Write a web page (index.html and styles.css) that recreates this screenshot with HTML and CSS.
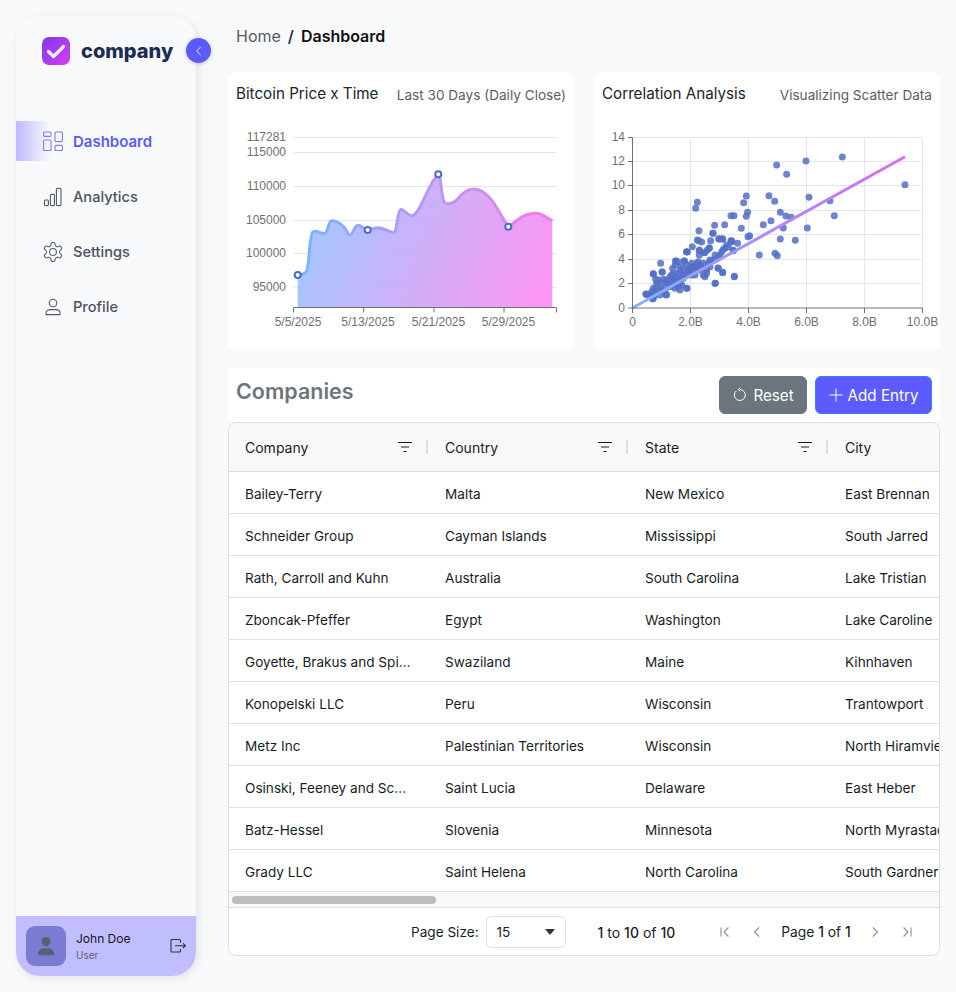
FILE: index.html
```html
<!DOCTYPE html>
<html lang="en">

<head>
    <meta charset="UTF-8">
    <title>Dashboard</title>
    <link rel="stylesheet" href="styles.css">
</head>

<body>
    <div class="layout">
        <aside class="sidebar">
            <div class="brand">
                <svg class="brand-logo" viewBox="0 0 30 30">
                    <defs>
                        <linearGradient id="logoFill" x1="0" y1="0" x2="1" y2="1">
                            <stop offset="0" stop-color="#7a3bea" />
                            <stop offset="1" stop-color="#d93cf6" />
                        </linearGradient>
                    </defs>
                    <rect x="1" y="1" width="28" height="28" rx="7" fill="url(#logoFill)" />
                    <path d="M7.5 15.5l5 5 10-10" fill="none" stroke="#f7f1ff" stroke-width="3.2" stroke-linecap="round" stroke-linejoin="round" />
                </svg>
                <span class="brand-name">company</span>
            </div>
            <button class="collapse-btn">
                <svg viewBox="0 0 12 12" width="12" height="12">
                    <path d="M7.8 1.8L3.6 6l4.2 4.2" fill="none" stroke="#e6e6ff" stroke-width="1" />
                </svg>
            </button>

            <nav class="nav">
                <a class="nav-item active">
                    <svg class="nav-icon" viewBox="0 0 20 20" fill="none" stroke="#7d7bff" stroke-width="1.1">
                        <rect x="0.6" y="1" width="7.4" height="4.4" rx="1" />
                        <rect x="12" y="1" width="7.4" height="9.6" rx="1" />
                        <rect x="0.6" y="9" width="7.4" height="10.6" rx="1" />
                        <rect x="12" y="14.4" width="7.4" height="5.2" rx="1" />
                    </svg>
                    Dashboard
                </a>
                <a class="nav-item">
                    <svg class="nav-icon" viewBox="0 0 20 20" fill="none" stroke="#555a66" stroke-width="1.1">
                        <rect x="1.4" y="13" width="4" height="5.6" rx="1" />
                        <rect x="7.4" y="7.4" width="4" height="11.2" rx="1" />
                        <rect x="13.4" y="1.4" width="4.6" height="17.2" rx="1.4" />
                    </svg>
                    Analytics
                </a>
                <a class="nav-item">
                    <svg class="nav-icon" viewBox="1.5 1.5 21 21" fill="none" stroke="#555a66" stroke-width="1.1">
                        <path d="M12.22 2h-.44a2 2 0 0 0-2 2v.18a2 2 0 0 1-1 1.73l-.43.25a2 2 0 0 1-2 0l-.15-.08a2 2 0 0 0-2.73.73l-.22.38a2 2 0 0 0 .73 2.73l.15.1a2 2 0 0 1 1 1.72v.51a2 2 0 0 1-1 1.74l-.15.09a2 2 0 0 0-.73 2.73l.22.38a2 2 0 0 0 2.73.73l.15-.08a2 2 0 0 1 2 0l.43.25a2 2 0 0 1 1 1.73V20a2 2 0 0 0 2 2h.44a2 2 0 0 0 2-2v-.18a2 2 0 0 1 1-1.73l.43-.25a2 2 0 0 1 2 0l.15.08a2 2 0 0 0 2.73-.73l.22-.39a2 2 0 0 0-.73-2.73l-.15-.08a2 2 0 0 1-1-1.74v-.5a2 2 0 0 1 1-1.74l.15-.09a2 2 0 0 0 .73-2.73l-.22-.38a2 2 0 0 0-2.73-.73l-.15.08a2 2 0 0 1-2 0l-.43-.25a2 2 0 0 1-1-1.73V4a2 2 0 0 0-2-2z" />
                        <circle cx="12" cy="12" r="3.6" />
                    </svg>
                    Settings
                </a>
                <a class="nav-item">
                    <svg class="nav-icon" viewBox="0 0 20 20" fill="none" stroke="#555a66" stroke-width="1.1">
                        <circle cx="10" cy="6" r="3.8" />
                        <path d="M3 17.6v-1.4c0-2.2 1.8-3.6 4-3.6h6c2.2 0 4 1.400 4 3.600v1.400z" stroke-linejoin="round" />
                    </svg>
                    Profile
                </a>
            </nav>

            <div class="user-box">
                <div class="avatar">
                    <svg viewBox="0 0 20 20" width="20" height="20" fill="#5c6070">
                        <circle cx="10" cy="5.6" r="4.6" />
                        <path d="M1.800 18.400c0-3.800 2.400-6 5.400-6h5.600c3 0 5.400 2.200 5.400 6 0 .6-.4.8-.8.8H2.600c-.4 0-.8-.2-.8-.8z" />
                    </svg>
                </div>
                <div class="user-info">
                    <div class="user-name">John Doe</div>
                    <div class="user-role">User</div>
                </div>
                <svg class="logout" viewBox="0 0 16 16" width="16" height="16" fill="none" stroke="#2c3040" stroke-width="1.100">
                    <path d="M10.500 4.500V2.500a1 1 0 0 0-1-1h-7.500a1 1 0 0 0-1 1v10.500a1 1 0 0 0 1 1h7.500a1 1 0 0 0 1-1v-2" />
                    <path d="M5 7.700h10.300M13 5.400l2.400 2.300-2.400 2.300" />
                </svg>
            </div>
        </aside>

        <main class="main">
            <div class="breadcrumb">
                <span>Home</span>
                <span class="crumb-sep">/</span>
                <span class="crumb-current">Dashboard</span>
            </div>

            <section class="charts">
                <div class="card">
                    <div class="card-head">
                        <span class="card-title">Bitcoin Price x Time</span>
                        <span class="card-sub">Last 30 Days (Daily Close)</span>
                    </div>
                    <!-- viewBox is page coordinates, easier to read off the screenshot -->
                    <svg class="chart" viewBox="228 120 346 231">
                        <defs>
                            <linearGradient id="areaFill" gradientUnits="userSpaceOnUse" x1="298" y1="200" x2="552" y2="300">
                                <stop offset="0" stop-color="#92c3ff" />
                                <stop offset="1" stop-color="#ff86f1" />
                            </linearGradient>
                            <linearGradient id="areaLine" gradientUnits="userSpaceOnUse" x1="298" y1="230" x2="552" y2="230">
                                <stop offset="0" stop-color="#74b6ff" />
                                <stop offset="1" stop-color="#f879ee" />
                            </linearGradient>
                        </defs>
                        <g class="grid-lines">
                            <path d="M293.500 137.500H556.500M293.500 152.500H556.500M293.500 186.500H556.500M293.500 220.500H556.500M293.500 253.500H556.500M293.500 287.500H556.500" />
                        </g>
                        <path class="area" d="M297.700 275C302 275 305 274.500 306.700 271C309 266 309 246 311 238C312 232 313 231.300 315 231.300C318 231.300 322 234 325 233.300C328 232.500 328 221 332 220.700C336 220.500 341 224 344 227C346 229 348 235 350 235C353 235 354 225.500 358 225.300C361 225 364 230 367.700 230C371 230 374 227.700 378.300 227.700C384 227.700 390 233 394 232.500C397 232 397 211 401 209.500C404 208.500 407 215.700 411.700 215.700C416 215.700 419 209 422 203C426 195 432 180 438.300 174.300C441 172 441 200 445 203C449 205 452 203 456.700 200C460 197 464 189.500 473.300 189C480 189 485 193 489 197C496 204 502 218 508.300 226.700C513 225 520 215 530 214C534 213 538 213 541 214.500C545 216 549 219.500 552.300 220.700V307.500H297.700Z" />
                        <path class="area-line" d="M297.700 275C302 275 305 274.500 306.700 271C309 266 309 246 311 238C312 232 313 231.300 315 231.300C318 231.300 322 234 325 233.300C328 232.500 328 221 332 220.700C336 220.500 341 224 344 227C346 229 348 235 350 235C353 235 354 225.500 358 225.300C361 225 364 230 367.700 230C371 230 374 227.700 378.300 227.700C384 227.700 390 233 394 232.500C397 232 397 211 401 209.500C404 208.500 407 215.700 411.700 215.700C416 215.700 419 209 422 203C426 195 432 180 438.300 174.300C441 172 441 200 445 203C449 205 452 203 456.700 200C460 197 464 189.500 473.300 189C480 189 485 193 489 197C496 204 502 218 508.300 226.700C513 225 520 215 530 214C534 213 538 213 541 214.500C545 216 549 219.500 552.300 220.700" />
                        <path class="axis" d="M293.500 307.500H556.500M293.500 307.500v5M363.700 307.500v5M434 307.500v5M504 307.500v5M556.500 307.500v5" />
                        <g class="marks">
                            <circle cx="297.700" cy="275" r="3" />
                            <circle cx="367.700" cy="230" r="3" />
                            <circle cx="438.300" cy="174.300" r="3" />
                            <circle cx="508.300" cy="226.700" r="3" />
                        </g>
                        <g class="axis-y">
                            <text x="286" y="141">117281</text>
                            <text x="286" y="156">115000</text>
                            <text x="286" y="190">110000</text>
                            <text x="286" y="224">105000</text>
                            <text x="286" y="257">100000</text>
                            <text x="286" y="291">95000</text>
                        </g>
                        <g class="axis-x">
                            <text x="298" y="326">5/5/2025</text>
                            <text x="368" y="326">5/13/2025</text>
                            <text x="438.500" y="326">5/21/2025</text>
                            <text x="508.500" y="326">5/29/2025</text>
                        </g>
                    </svg>
                </div>

                <div class="card">
                    <div class="card-head">
                        <span class="card-title">Correlation Analysis</span>
                        <span class="card-sub">Visualizing Scatter Data</span>
                    </div>
                    <svg class="chart" viewBox="594 120 346 231">
                        <defs>
                            <linearGradient id="fitLine" gradientUnits="userSpaceOnUse" x1="632" y1="308" x2="905" y2="157">
                                <stop offset="0" stop-color="#7fb4ff" />
                                <stop offset="0.6" stop-color="#b882f5" />
                                <stop offset="1" stop-color="#d56ff0" />
                            </linearGradient>
                        </defs>
                        <g class="grid-lines">
                            <path d="M632.500 137.500H922.500M632.500 161.500H922.500M632.500 185.500H922.500M632.500 210.500H922.500M632.500 234.500H922.500M632.500 259.500H922.500M632.500 283.500H922.500" />
                            <path d="M690.500 137.500V308M748.500 137.500V308M806.500 137.500V308M864.500 137.500V308M922.500 137.500V308" />
                        </g>
                        <!-- dots read off the 3x zooms, so these two groups are scaled back down -->
                        <g class="dots" transform="translate(590 70) scale(0.3333)">
                            <circle cx="757" cy="261" /><circle cx="648" cy="273" /><circle cx="560" cy="285" /><circle cx="590" cy="313" />
                            <circle cx="945" cy="344" /><circle cx="657" cy="382" /><circle cx="537" cy="377" /><circle cx="554" cy="394" />
                            <circle cx="469" cy="378" /><circle cx="461" cy="398" /><circle cx="322" cy="397" /><circle cx="317" cy="415" />
                            <circle cx="720" cy="392" /><circle cx="733" cy="437" /><circle cx="571" cy="427" /><circle cx="588" cy="438" />
                            <circle cx="604" cy="442" /><circle cx="423" cy="437" /><circle cx="432" cy="437" /><circle cx="469" cy="439" />
                            <circle cx="473" cy="427" /><circle cx="404" cy="464" /><circle cx="374" cy="466" /><circle cx="327" cy="482" />
                            <circle cx="454" cy="475" /><circle cx="520" cy="464" /><circle cx="543" cy="452" /><circle cx="580" cy="474" />
                            <circle cx="652" cy="474" /><circle cx="479" cy="497" /><circle cx="474" cy="500" /><circle cx="369" cy="490" />
                            <circle cx="386" cy="506" /><circle cx="398" cy="506" /><circle cx="571" cy="507" /><circle cx="616" cy="511" />
                            <circle cx="322" cy="510" /><circle cx="326" cy="512" /><circle cx="335" cy="516" /><circle cx="362" cy="512" />
                            <circle cx="423" cy="512" /><circle cx="426" cy="515" /><circle cx="443" cy="520" /><circle cx="307" cy="530" />
                            <circle cx="290" cy="545" /><circle cx="292" cy="546" /><circle cx="328" cy="540" /><circle cx="358" cy="533" />
                            <circle cx="352" cy="540" /><circle cx="345" cy="548" /><circle cx="430" cy="541" /><circle cx="508" cy="555" />
                            <circle cx="555" cy="550" /><circle cx="562" cy="557" /><circle cx="212" cy="580" /><circle cx="375" cy="640" />
                            <circle cx="433" cy="620" /><circle cx="398" cy="608" /><circle cx="384" cy="594" /><circle cx="291" cy="655" />
                            <circle cx="190" cy="612" /><circle cx="216" cy="606" /><circle cx="257" cy="573" /><circle cx="264" cy="575" />
                            <circle cx="283" cy="574" /><circle cx="168" cy="673" /><circle cx="190" cy="685" /><circle cx="230" cy="674" />
                            <circle cx="175" cy="675" />
                        </g>
                        <g class="dots" transform="translate(630 220) scale(0.3333)">
                            <circle cx="249" cy="40" /><circle cx="268" cy="57" /><circle cx="278" cy="58" /><circle cx="305" cy="62" />
                            <circle cx="290" cy="75" /><circle cx="285" cy="85" /><circle cx="275" cy="95" /><circle cx="170" cy="96" />
                            <circle cx="208" cy="92" /><circle cx="238" cy="85" /><circle cx="222" cy="98" /><circle cx="208" cy="105" />
                            <circle cx="255" cy="105" /><circle cx="265" cy="110" /><circle cx="310" cy="92" /><circle cx="240" cy="120" />
                            <circle cx="137" cy="123" /><circle cx="163" cy="122" /><circle cx="185" cy="130" /><circle cx="200" cy="130" />
                            <circle cx="210" cy="135" /><circle cx="136" cy="135" /><circle cx="155" cy="140" /><circle cx="190" cy="140" />
                            <circle cx="215" cy="145" /><circle cx="230" cy="150" /><circle cx="240" cy="140" /><circle cx="265" cy="145" />
                            <circle cx="278" cy="157" /><circle cx="70" cy="161" /><circle cx="97" cy="156" /><circle cx="130" cy="160" />
                            <circle cx="145" cy="160" /><circle cx="165" cy="155" /><circle cx="185" cy="150" /><circle cx="200" cy="150" />
                            <circle cx="220" cy="165" /><circle cx="120" cy="170" /><circle cx="130" cy="175" /><circle cx="150" cy="180" />
                            <circle cx="175" cy="165" /><circle cx="77" cy="178" /><circle cx="100" cy="178" /><circle cx="80" cy="190" />
                            <circle cx="95" cy="190" /><circle cx="115" cy="190" /><circle cx="140" cy="195" /><circle cx="160" cy="175" />
                            <circle cx="48" cy="222" /><circle cx="60" cy="225" /><circle cx="70" cy="205" /><circle cx="80" cy="200" />
                            <circle cx="75" cy="215" /><circle cx="95" cy="205" /><circle cx="105" cy="210" /><circle cx="68" cy="237" />
                            <circle cx="90" cy="225" /><circle cx="108" cy="225" /><circle cx="135" cy="205" /><circle cx="150" cy="210" />
                            <circle cx="170" cy="205" /><circle cx="150" cy="190" /><circle cx="256" cy="190" /><circle cx="313" cy="169" />
                            <circle cx="110" cy="180" /><circle cx="125" cy="185" /><circle cx="195" cy="165" /><circle cx="210" cy="150" />
                            <circle cx="225" cy="170" /><circle cx="205" cy="125" /><circle cx="180" cy="145" /><circle cx="170" cy="135" />
                            <circle cx="150" cy="150" /><circle cx="128" cy="145" />
                            <circle cx="195" cy="140" /><circle cx="205" cy="140" /><circle cx="175" cy="150" /><circle cx="160" cy="165" />
                            <circle cx="140" cy="170" /><circle cx="125" cy="165" /><circle cx="110" cy="190" /><circle cx="88" cy="210" />
                            <circle cx="75" cy="225" /><circle cx="65" cy="215" /><circle cx="85" cy="180" /><circle cx="135" cy="185" />
                            <circle cx="155" cy="195" /><circle cx="185" cy="165" /><circle cx="235" cy="130" /><circle cx="250" cy="120" />
                            <circle cx="270" cy="105" /><circle cx="280" cy="88" /><circle cx="295" cy="80" /><circle cx="220" cy="130" />
                            <circle cx="230" cy="160" /><circle cx="120" cy="200" /><circle cx="100" cy="215" /><circle cx="145" cy="200" />
                        </g>
                        <path class="fit-line" d="M632.300 308L905 156.700" />
                        <path class="axis" d="M632.500 137.500V308H922.500M628 137.500h4.500M628 161.500h4.500M628 185.500h4.500M628 210.500h4.500M628 234.500h4.500M628 259.500h4.500M628 283.500h4.500M628 308h4.500M632.500 308v5M690.500 308v5M748.500 308v5M806.500 308v5M864.500 308v5M922.500 308v5" />
                        <g class="axis-y">
                            <text x="625" y="141">14</text>
                            <text x="625" y="165">12</text>
                            <text x="625" y="189">10</text>
                            <text x="625" y="214">8</text>
                            <text x="625" y="238">6</text>
                            <text x="625" y="263">4</text>
                            <text x="625" y="287">2</text>
                            <text x="625" y="312">0</text>
                        </g>
                        <g class="axis-x">
                            <text x="632.500" y="326">0</text>
                            <text x="690.500" y="326">2.0B</text>
                            <text x="748.500" y="326">4.0B</text>
                            <text x="806.500" y="326">6.0B</text>
                            <text x="864.500" y="326">8.0B</text>
                            <text x="922.500" y="326">10.0B</text>
                        </g>
                    </svg>
                </div>
            </section>

            <section class="companies">
                <div class="companies-head">
                    <h2 class="companies-title">Companies</h2>
                    <div class="companies-actions">
                        <button class="btn btn-reset">
                            <svg viewBox="0 0 16 16" width="16" height="16" fill="none" stroke="#fff" stroke-width="1">
                                <path d="M4.400 3.700A5.500 5.500 0 1 0 8 2.500" />
                                <path d="M8.300 .8L6.200 2.500l2.100 1.700" />
                            </svg>
                            Reset
                        </button>
                        <button class="btn btn-add">
                            <svg viewBox="0 0 14 14" width="14" height="14" stroke="#fff" stroke-width="1">
                                <path d="M7 .5v13M.5 7h13" />
                            </svg>
                            Add Entry
                        </button>
                    </div>
                </div>

                <div class="table">
                    <div class="table-scroll">
                        <div class="row row-head">
                            <div class="cell">Company
                                <svg class="filter" viewBox="0 0 14 12" width="14" height="12"><path d="M0 1.500h14M3 6h8M5.500 10.500h3" /></svg>
                            </div>
                            <div class="cell">Country
                                <svg class="filter" viewBox="0 0 14 12" width="14" height="12"><path d="M0 1.500h14M3 6h8M5.500 10.500h3" /></svg>
                            </div>
                            <div class="cell">State
                                <svg class="filter" viewBox="0 0 14 12" width="14" height="12"><path d="M0 1.500h14M3 6h8M5.500 10.500h3" /></svg>
                            </div>
                            <div class="cell">City</div>
                        </div>
                        <div class="row"><div class="cell">Bailey-Terry</div><div class="cell">Malta</div><div class="cell">New Mexico</div><div class="cell">East Brennan</div></div>
                        <div class="row"><div class="cell">Schneider Group</div><div class="cell">Cayman Islands</div><div class="cell">Mississippi</div><div class="cell">South Jarred</div></div>
                        <div class="row"><div class="cell">Rath, Carroll and Kuhn</div><div class="cell">Australia</div><div class="cell">South Carolina</div><div class="cell">Lake Tristian</div></div>
                        <div class="row"><div class="cell">Zboncak-Pfeffer</div><div class="cell">Egypt</div><div class="cell">Washington</div><div class="cell">Lake Caroline</div></div>
                        <div class="row"><div class="cell">Goyette, Brakus and Spinka</div><div class="cell">Swaziland</div><div class="cell">Maine</div><div class="cell">Kihnhaven</div></div>
                        <div class="row"><div class="cell">Konopelski LLC</div><div class="cell">Peru</div><div class="cell">Wisconsin</div><div class="cell">Trantowport</div></div>
                        <div class="row"><div class="cell">Metz Inc</div><div class="cell">Palestinian Territories</div><div class="cell">Wisconsin</div><div class="cell">North Hiramview</div></div>
                        <div class="row"><div class="cell">Osinski, Feeney and Schmidt</div><div class="cell">Saint Lucia</div><div class="cell">Delaware</div><div class="cell">East Heber</div></div>
                        <div class="row"><div class="cell">Batz-Hessel</div><div class="cell">Slovenia</div><div class="cell">Minnesota</div><div class="cell">North Myrastad</div></div>
                        <div class="row"><div class="cell">Grady LLC</div><div class="cell">Saint Helena</div><div class="cell">North Carolina</div><div class="cell">South Gardner</div></div>
                    </div>
                    <div class="h-scroll"><div class="h-scroll-thumb"></div></div>
                    <div class="pager">
                        <span class="pager-label">Page Size:</span>
                        <div class="page-select"><span>15</span><i class="caret"></i></div>
                        <span class="pager-count"><b>1</b> to <b>10</b> of <b>10</b></span>
                        <div class="pager-nav">
                            <svg viewBox="0 0 12 12" width="12" height="12"><path d="M2 1.500v9M9.500 1.500L5 6l4.500 4.500" /></svg>
                            <svg viewBox="0 0 12 12" width="12" height="12"><path d="M8 1.500L3.500 6 8 10.500" /></svg>
                            <span class="pager-page">Page <b>1</b> of <b>1</b></span>
                            <svg viewBox="0 0 12 12" width="12" height="12"><path d="M4 1.500L8.500 6 4 10.500" /></svg>
                            <svg viewBox="0 0 12 12" width="12" height="12"><path d="M10 1.500v9M2.500 1.500L7 6l-4.500 4.500" /></svg>
                        </div>
                    </div>
                </div>
            </section>
        </main>
    </div>
</body>

</html>
```

FILE: styles.css
```css
* {
    box-sizing: border-box;
}

body {
    margin: 0;
    background: #f8f9fb;
    color: #212529;
    font-family: Inter, "Noto Sans", sans-serif;
    font-size: 13.6px;
}

.layout {
    display: flex;
    height: 992px;
    overflow: hidden;
}

/* sidebar */
.sidebar {
    position: relative;
    display: flex;
    flex-direction: column;
    flex: none;
    width: 180px;
    height: 960px;
    margin: 16px 0 0 16px;
    background: #f8f9fb;
    border-radius: 24px;
    box-shadow: 2px 2px 8px rgba(0, 0, 0, 0.09);
}

.brand {
    display: flex;
    align-items: center;
    gap: 10px;
    padding-left: 25px;
    height: 70px;
}

.brand-logo {
    width: 30px;
    height: 30px;
    flex: none;
}

.brand-name {
    color: #1a2d55;
    font-size: 20px;
    font-weight: 800;
}

.collapse-btn {
    position: absolute;
    top: 22px;
    left: 170px;
    display: flex;
    align-items: center;
    justify-content: center;
    width: 25px;
    height: 25px;
    padding: 0;
    border: none;
    border-radius: 50%;
    background: #5b5bfb;
    box-shadow: 0 1px 4px rgba(0, 0, 0, 0.2);
}

.nav {
    display: flex;
    flex-direction: column;
    gap: 15px;
    padding-top: 35px;
    flex: 1;
}

.nav-item {
    display: flex;
    align-items: center;
    gap: 10px;
    height: 40px;
    padding-left: 27px;
    color: #4d525e;
    font-size: 14.6px;
    font-weight: 500;
}

.nav-item.active {
    margin-bottom: 1px;
    color: #5b5bfb;
    font-size: 15px;
    font-weight: 600;
    background: linear-gradient(90deg, #bdbbff, rgba(189, 187, 255, 0) 34px);
}

.nav-icon {
    width: 20px;
    height: 20px;
    flex: none;
}

.user-box {
    display: flex;
    align-items: center;
    gap: 10px;
    height: 60px;
    padding: 0 10px;
    background: #c0beff;
    border-radius: 0 0 24px 24px;
}

.avatar {
    display: flex;
    align-items: center;
    justify-content: center;
    width: 40px;
    height: 40px;
    background: #7a7bd2;
    border-radius: 9px;
}

.user-info {
    flex: 1;
    padding-top: 1px;
}

.user-name {
    color: #15151f;
    font-size: 12px;
    line-height: 16px;
}

.user-role {
    margin-top: 1px;
    color: #5b5e72;
    font-size: 10px;
    line-height: 14px;
}

/* main column */
.main {
    flex: 1;
    min-width: 0;
    padding: 0 16px 0 32px;
}

.breadcrumb {
    display: flex;
    align-items: center;
    gap: 7px;
    height: 72px;
    padding: 0 0 0 8px;
    font-size: 16px;
    color: #555b66;
}

.crumb-sep {
    color: #333;
    font-weight: 600;
}

.crumb-current {
    color: #111;
    font-weight: 600;
}

.charts {
    display: flex;
    gap: 20px;
}

.card {
    width: 346px;
    height: 279px;
    background: #fff;
    border-radius: 8px;
}

.card-head {
    display: flex;
    align-items: center;
    justify-content: space-between;
    height: 48px;
    padding: 0 8px 6px 8px;
}

.card-title {
    color: #212529;
    font-size: 15.2px;
}

.card-sub {
    margin-top: 3px;
    color: #5a5d66;
    font-size: 13.6px;
}

.chart {
    display: block;
    width: 346px;
    height: 231px;
}

.chart text {
    fill: #6e7079;
    font-family: "Liberation Sans", Arial, sans-serif;
    font-size: 12px;
}

.grid-lines path {
    fill: none;
    stroke: #e0e6f1;
}

.axis {
    fill: none;
    stroke: #6e7079;
}

.area {
    fill: url(#areaFill);
    opacity: 0.88;
}

.area-line {
    fill: none;
    stroke: url(#areaLine);
    stroke-width: 3;
}

.marks circle {
    fill: #fff;
    stroke: #4a6cc5;
    stroke-width: 2;
}

.axis-y text {
    text-anchor: end;
}

.axis-x text {
    text-anchor: middle;
}

.dots circle {
    r: 10.5px;
    fill: #5470c6;
    opacity: 0.85;
}

.fit-line {
    fill: none;
    stroke: url(#fitLine);
    stroke-width: 3;
}

/* companies table */
.companies {
    margin-top: 17px;
}

.companies-head {
    display: flex;
    justify-content: space-between;
    height: 54px;
    padding: 8px 8px 0 8px;
    background: #fff;
}

.companies-title {
    margin: 0;
    color: #6c757d;
    font-size: 21.5px;
    font-weight: 600;
    line-height: 30px;
}

.companies-actions {
    display: flex;
    gap: 8px;
}

.btn {
    display: flex;
    align-items: center;
    justify-content: center;
    gap: 5px;
    height: 38px;
    padding: 0;
    color: #fff;
    font-family: inherit;
    font-size: 15.2px;
    font-weight: 400;
    border-radius: 6px;
}

.btn-reset {
    width: 88px;
    background: #6c757d;
    border: 1px solid #6c757d;
}

.btn-add {
    width: 117px;
    background: #5b5bff;
    border: 1px solid #3f7dff;
}

.table {
    height: 534px;
    background: #fff;
    border: 1px solid #dddfe1;
    border-radius: 8px;
    overflow: hidden;
}

.table-scroll {
    height: 468px;
    overflow: hidden;
}

.row {
    display: grid;
    grid-template-columns: repeat(4, 200px);
    height: 42px;
    border-bottom: 1px solid #dddfe1;
    color: #181d1f;
}

.row:last-child {
    border-bottom: none;
}

.row-head {
    height: 49px;
    background: #f8f8f8;
    font-size: 14px;
}

.cell {
    position: relative;
    padding: 0 16px;
    line-height: 45px;
    white-space: nowrap;
    overflow: hidden;
    text-overflow: ellipsis;
}

.row-head .cell {
    line-height: 50px;
    overflow: visible;
}

/* column separator */
.row-head .cell:nth-child(-n+3)::after {
    content: "";
    position: absolute;
    top: 17px;
    right: 1px;
    width: 2px;
    height: 14px;
    background: #dddfe1;
}

.filter {
    position: absolute;
    top: 18px;
    right: 17px;
    fill: none;
    stroke: #181d1f;
    stroke-width: 1.200;
}

.h-scroll {
    height: 17px;
    padding: 4px 3px 3px;
    background: #f8f8f8;
    border-top: 1px solid #dddfe1;
    border-bottom: 1px solid #dddfe1;
}

.h-scroll-thumb {
    width: 204px;
    height: 8px;
    background: #bdbdbd;
    border-radius: 4px;
}

.pager {
    display: flex;
    align-items: center;
    height: 48px;
    padding-left: 182px;
    color: #181d1f;
}

.pager b {
    font-weight: 500;
}

.pager-label {
    margin-right: 7px;
}

.page-select {
    display: flex;
    align-items: center;
    justify-content: space-between;
    width: 80px;
    height: 32px;
    padding: 0 10px;
    border: 1px solid #dddfe1;
    border-radius: 5px;
}

.caret {
    width: 0;
    height: 0;
    border-top: 6px solid #333;
    border-left: 5px solid transparent;
    border-right: 5px solid transparent;
}

.pager-count {
    margin-left: 32px;
    font-size: 14px;
}

.pager-nav {
    display: flex;
    align-items: center;
    gap: 20px;
    margin-left: 44px;
}

.pager-nav svg {
    fill: none;
    stroke: #8b8f95;
    stroke-width: 1.100;
}

.pager-page {
    margin: 0 -2px;
    font-size: 13.8px;
}
```
